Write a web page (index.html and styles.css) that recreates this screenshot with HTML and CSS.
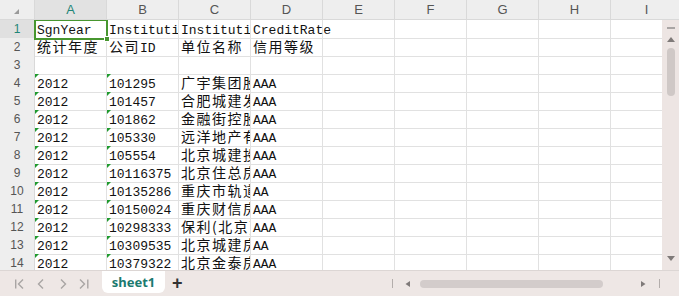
FILE: index.html
```html
<!DOCTYPE html>
<html lang="zh">
<head>
    <meta charset="UTF-8">
    <title>sheet1</title>
    <link rel="stylesheet" href="styles.css">
</head>
<body>
<div class="book">
    <div class="colheads">
        <div class="corner"><span class="tri"></span></div>
        <div class="ch active">A</div>
        <div class="ch">B</div>
        <div class="ch">C</div>
        <div class="ch">D</div>
        <div class="ch">E</div>
        <div class="ch">F</div>
        <div class="ch">G</div>
        <div class="ch">H</div>
        <div class="ch">I</div>
    </div>

    <div class="body">
        <div class="rows">
            <div class="row">
                <div class="rh active">1</div>
                <div class="cell sel">SgnYear</div>
                <div class="cell">InstitutionID</div>
                <div class="cell">InstitutionName</div>
                <div class="cell spill">CreditRate</div>
                <div class="cell"></div><div class="cell"></div><div class="cell"></div><div class="cell"></div><div class="cell"></div>
            </div>
            <div class="row">
                <div class="rh">2</div>
                <div class="cell"><span class="zh">统计年度</span></div>
                <div class="cell"><span class="zh">公司</span>ID</div>
                <div class="cell"><span class="zh">单位名称</span></div>
                <div class="cell"><span class="zh">信用等级</span></div>
                <div class="cell"></div><div class="cell"></div><div class="cell"></div><div class="cell"></div><div class="cell"></div>
            </div>
            <div class="row">
                <div class="rh">3</div>
                <div class="cell"></div><div class="cell"></div><div class="cell"></div><div class="cell"></div>
                <div class="cell"></div><div class="cell"></div><div class="cell"></div><div class="cell"></div><div class="cell"></div>
            </div>
            <!-- Datenzeilen -->
            <div class="row">
                <div class="rh">4</div>
                <div class="cell txt">2012</div>
                <div class="cell txt">101295</div>
                <div class="cell"><span class="zh">广宇集团股份有限公司</span></div>
                <div class="cell">AAA</div>
                <div class="cell"></div><div class="cell"></div><div class="cell"></div><div class="cell"></div><div class="cell"></div>
            </div>
            <div class="row">
                <div class="rh">5</div>
                <div class="cell txt">2012</div>
                <div class="cell txt">101457</div>
                <div class="cell"><span class="zh">合肥城建发展股份有限公司</span></div>
                <div class="cell">AAA</div>
                <div class="cell"></div><div class="cell"></div><div class="cell"></div><div class="cell"></div><div class="cell"></div>
            </div>
            <div class="row">
                <div class="rh">6</div>
                <div class="cell txt">2012</div>
                <div class="cell txt">101862</div>
                <div class="cell"><span class="zh">金融街控股股份有限公司</span></div>
                <div class="cell">AAA</div>
                <div class="cell"></div><div class="cell"></div><div class="cell"></div><div class="cell"></div><div class="cell"></div>
            </div>
            <div class="row">
                <div class="rh">7</div>
                <div class="cell txt">2012</div>
                <div class="cell txt">105330</div>
                <div class="cell"><span class="zh">远洋地产有限公司</span></div>
                <div class="cell">AAA</div>
                <div class="cell"></div><div class="cell"></div><div class="cell"></div><div class="cell"></div><div class="cell"></div>
            </div>
            <div class="row">
                <div class="rh">8</div>
                <div class="cell txt">2012</div>
                <div class="cell txt">105554</div>
                <div class="cell"><span class="zh">北京城建投资发展股份有限公司</span></div>
                <div class="cell">AAA</div>
                <div class="cell"></div><div class="cell"></div><div class="cell"></div><div class="cell"></div><div class="cell"></div>
            </div>
            <div class="row">
                <div class="rh">9</div>
                <div class="cell txt">2012</div>
                <div class="cell txt">10116375</div>
                <div class="cell"><span class="zh">北京住总房地产开发有限责任公司</span></div>
                <div class="cell">AAA</div>
                <div class="cell"></div><div class="cell"></div><div class="cell"></div><div class="cell"></div><div class="cell"></div>
            </div>
            <div class="row">
                <div class="rh">10</div>
                <div class="cell txt">2012</div>
                <div class="cell txt">10135286</div>
                <div class="cell"><span class="zh">重庆市轨道交通(集团)有限公司</span></div>
                <div class="cell">AA</div>
                <div class="cell"></div><div class="cell"></div><div class="cell"></div><div class="cell"></div><div class="cell"></div>
            </div>
            <div class="row">
                <div class="rh">11</div>
                <div class="cell txt">2012</div>
                <div class="cell txt">10150024</div>
                <div class="cell"><span class="zh">重庆财信房地产开发有限公司</span></div>
                <div class="cell">AAA</div>
                <div class="cell"></div><div class="cell"></div><div class="cell"></div><div class="cell"></div><div class="cell"></div>
            </div>
            <div class="row">
                <div class="rh">12</div>
                <div class="cell txt">2012</div>
                <div class="cell txt">10298333</div>
                <div class="cell"><span class="zh">保利(北京)有限公司</span></div>
                <div class="cell">AAA</div>
                <div class="cell"></div><div class="cell"></div><div class="cell"></div><div class="cell"></div><div class="cell"></div>
            </div>
            <div class="row">
                <div class="rh">13</div>
                <div class="cell txt">2012</div>
                <div class="cell txt">10309535</div>
                <div class="cell"><span class="zh">北京城建房地产开发有限公司</span></div>
                <div class="cell">AA</div>
                <div class="cell"></div><div class="cell"></div><div class="cell"></div><div class="cell"></div><div class="cell"></div>
            </div>
            <div class="row">
                <div class="rh">14</div>
                <div class="cell txt">2012</div>
                <div class="cell txt">10379322</div>
                <div class="cell"><span class="zh">北京金泰房地产开发有限责任公司</span></div>
                <div class="cell">AAA</div>
                <div class="cell"></div><div class="cell"></div><div class="cell"></div><div class="cell"></div><div class="cell"></div>
            </div>
        </div>

        <div class="vscroll">
            <span class="vdash"></span>
            <span class="up"></span>
            <span class="vthumb"></span>
            <span class="down"></span>
        </div>
    </div>

    <div class="tabbar">
        <svg class="nav" width="96" height="26" viewBox="0 0 96 26">
            <g fill="none" stroke="#a9a5a4" stroke-width="1.4">
                <path d="M15.7 8.5v9"/>
                <path d="M23 8.5l-4.5 4.5 4.5 4.5"/>
                <path d="M43 8.5l-4.5 4.5 4.5 4.5"/>
                <path d="M61 8.5l4.5 4.5-4.5 4.5"/>
                <path d="M80 8.5l4.5 4.5-4.5 4.5"/>
                <path d="M87.8 8.5v9"/>
            </g>
        </svg>
        <div class="tab">sheet1</div>
        <div class="add">+</div>
        <svg class="hscroll" width="287" height="26" viewBox="0 0 287 26">
            <path d="M0.5 8v9" stroke="#b3adab" stroke-width="1"/>
            <path d="M18 10v6l-4.5-3z" fill="#7f7a79"/>
            <rect x="28" y="9" width="183" height="8" rx="4" fill="#d3cccb"/>
            <path d="M249 10v6l4.5-3z" fill="#7f7a79"/>
            <path d="M267.5 8v9" stroke="#b3adab" stroke-width="1"/>
        </svg>
    </div>
</div>
</body>
</html>
```

FILE: styles.css
```css
body {
    margin: 0;
    background-color: #fff;
    font-family: "Liberation Sans", Arial, sans-serif;
}
.book {
    width: 679px;
    height: 296px;
    overflow: hidden;
    display: flex;
    flex-direction: column;
}

/* Spaltenköpfe */
.colheads {
    display: flex;
    height: 20px;
    flex: none;
    background-color: #eeeeee;
    border-bottom: 1px solid #d9d9d9;
    box-sizing: border-box;
}
.corner {
    width: 35px;
    flex: none;
    border-right: 1px solid #d9d9d9;
    box-sizing: border-box;
    position: relative;
}
.corner .tri {
    position: absolute;
    left: 14px;
    top: 9px;
    width: 0;
    height: 0;
    border-left: 5px solid transparent;
    border-bottom: 5px solid #9a9a9a;
}
.ch {
    width: 72px;
    flex: none;
    border-right: 1px solid #d9d9d9;
    box-sizing: border-box;
    text-align: center;
    font-size: 13px;
    line-height: 19px;
    color: #555;
}
.ch.active {
    background-color: #e2e2e2;
    color: #1f8577;
}

.body {
    display: flex;
    flex: none;
    height: 250px;
    overflow: hidden;
}
.rows {
    flex: 1;
    overflow: hidden;
}
.row {
    display: grid;
    grid-template-columns: 35px repeat(9, 72px);
    height: 18px;
}
.rh {
    background-color: #eeeeee;
    border-right: 1px solid #d9d9d9;
    border-bottom: 1px solid #e3e3e3;
    box-sizing: border-box;
    text-align: center;
    font-size: 12px;
    line-height: 18px;
    color: #555;
}
.rh.active {
    background-color: #e0e0e0;
    color: #1f8577;
}
.cell {
    border-right: 1px solid #e1e1e1;
    border-bottom: 1px solid #e1e1e1;
    box-sizing: border-box;
    padding: 4px 0 0 2px;
    font-family: "Liberation Mono", "Noto Sans CJK SC", monospace;
    font-size: 13px;
    line-height: 14px;
    color: #111;
    white-space: nowrap;
    overflow: hidden;
    position: relative;
}
.cell.spill {
    overflow: visible;
    z-index: 1;
}
.cell.sel {
    outline: 2px solid #47962f;
    outline-offset: -1px;
    overflow: visible;
    z-index: 2;
}
.cell.sel::after {
    content: "";
    position: absolute;
    right: -4px;
    bottom: -4px;
    width: 4px;
    height: 4px;
    background-color: #47962f;
    border: 1px solid #fff;
}
.cell.txt::before {
    content: "";
    position: absolute;
    left: 0;
    top: 0;
    border-top: 4px solid #1f9a2e;
    border-right: 4px solid transparent;
}
.zh {
    font-family: "Noto Sans CJK SC", sans-serif;
    font-size: 14px;
    line-height: 8px;
    letter-spacing: 1.5px;
}

/* Bildlaufleiste rechts */
.vscroll {
    width: 17px;
    flex: none;
    background-color: #ede5e3;
    display: flex;
    flex-direction: column;
    align-items: center;
}
.vdash {
    width: 8px;
    height: 2px;
    background-color: #a9a5a4;
    margin-top: 7px;
}
.up {
    width: 0;
    height: 0;
    border-left: 4px solid transparent;
    border-right: 4px solid transparent;
    border-bottom: 5px solid #7f7a79;
    margin-top: 8px;
}
.vthumb {
    width: 8px;
    height: 48px;
    border-radius: 4px;
    background-color: #cfc8c6;
    margin-top: 6px;
}
.down {
    width: 0;
    height: 0;
    border-left: 4px solid transparent;
    border-right: 4px solid transparent;
    border-top: 5px solid #7f7a79;
    margin-top: auto;
    margin-bottom: 9px;
}

/* Tabellenreiter */
.tabbar {
    flex: 1;
    display: flex;
    align-items: flex-start;
    background-color: #eee7e5;
    border-top: 1px solid #dcd6d4;
}
.nav {
    flex: none;
    display: block;
}
.tab {
    margin-left: 6px;
    width: 63px;
    height: 22px;
    background-color: #fff;
    border-radius: 0 0 6px 6px;
    text-align: center;
    font-family: "Noto Sans", sans-serif;
    font-weight: 700;
    font-size: 13px;
    line-height: 22px;
    color: #1b7a6f;
}
.add {
    margin-left: 7px;
    font-family: "Liberation Sans", sans-serif;
    font-weight: 700;
    font-size: 18px;
    line-height: 24px;
    color: #333;
}
.hscroll {
    display: block;
    margin-left: auto;
}
```
